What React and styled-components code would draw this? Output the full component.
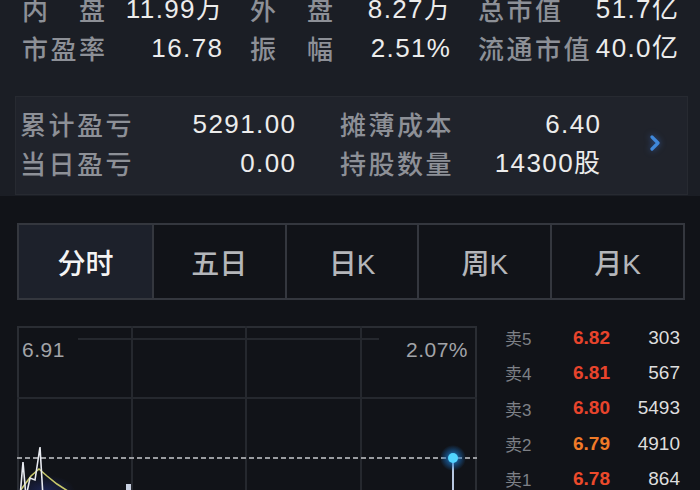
import styled, { createGlobalStyle } from "styled-components";

const GlobalStyle = createGlobalStyle`
  html, body {
    margin:0;
    padding:0;
    background:#111318;
  }
  body {
    width:700px;
    height:490px;
    overflow:hidden;
    font-family:"Liberation Sans","Noto Sans CJK SC",sans-serif;
  }
`;

const quotes = [
  ["内　盘", "11.99万"],
  ["外　盘", "8.27万"],
  ["总市值", "51.7亿"],
  ["市盈率", "16.78"],
  ["振　幅", "2.51%"],
  ["流通市值", "40.0亿"],
];

const holdings = [
  ["累计盈亏", "5291.00"],
  ["摊薄成本", "6.40"],
  ["当日盈亏", "0.00"],
  ["持股数量", "14300股"],
];

const tabs = ["分时", "五日", "日K", "周K", "月K"];

const asks = [
  ["卖5", "6.82", "303", "#e8442c"],
  ["卖4", "6.81", "567", "#e8442c"],
  ["卖3", "6.80", "5493", "#e8442c"],
  ["卖2", "6.79", "4910", "#f07a28"],
  ["卖1", "6.78", "864", "#ec4a2b"],
];

const App = () => {
  return (
    <>
      <GlobalStyle />
      <Top>
        <QuoteGrid>
          {quotes.map(([label, value]) => (
            <Stat key={label}>
              <Label>{label}</Label>
              <Value>{value}</Value>
            </Stat>
          ))}
        </QuoteGrid>
        <Panel>
          <PanelGrid>
            {holdings.map(([label, value]) => (
              <Stat key={label} $h={39.5}>
                <Label>{label}</Label>
                <Value>{value}</Value>
              </Stat>
            ))}
          </PanelGrid>
          <Chevron>
            <svg width="14" height="18" viewBox="0 0 14 18">
              <path d="M4 3 L10 9 L4 15" fill="none" stroke="#3f88da" strokeWidth="3.2" strokeLinecap="round" strokeLinejoin="round" />
            </svg>
          </Chevron>
        </Panel>
      </Top>

      <Tabs>
        {tabs.map((t, i) => (
          <Tab key={t} $active={i === 0}>{t}</Tab>
        ))}
      </Tabs>

      <Market>
        <Chart>
          <svg width="460" height="171" viewBox="0 0 460 171">
            <defs>
              <radialGradient id="glow">
                <stop offset="0%" stopColor="#2aa8ff" stopOpacity="0.9" />
                <stop offset="60%" stopColor="#1a6fc0" stopOpacity="0.45" />
                <stop offset="100%" stopColor="#1a6fc0" stopOpacity="0" />
              </radialGradient>
              <radialGradient id="haze">
                <stop offset="0%" stopColor="#23307a" stopOpacity="0.6" />
                <stop offset="100%" stopColor="#23307a" stopOpacity="0" />
              </radialGradient>
            </defs>
            <rect x="1" y="1" width="458" height="175" fill="none" stroke="#2a2d33" strokeWidth="2" />
            {[115, 229, 344].map((x) => (
              <line key={x} x1={x} y1="0" x2={x} y2="171" stroke="#25282e" strokeWidth="2" />
            ))}
            <line x1="61" y1="13" x2="362" y2="13" stroke="#25282e" strokeWidth="2" />
            <line x1="0" y1="72" x2="460" y2="72" stroke="#25282e" strokeWidth="2" />
            <line x1="0" y1="132" x2="460" y2="132" stroke="#9a9ca0" strokeWidth="2.2" strokeDasharray="5 3" />
            <ellipse cx="28" cy="165" rx="30" ry="16" fill="url(#haze)" />
            <polyline points="3,165 14,150 22,143 30,150 40,158 60,171" fill="none" stroke="#c8c86a" strokeWidth="1.6" />
            <polyline points="3,171 6,136 9,171 13,152 18,154 23,121 26,171" fill="none" stroke="#e8eaf0" strokeWidth="1.6" />
            <rect x="109" y="158" width="5" height="13" fill="#c8d0e0" />
            <line x1="436" y1="132" x2="436" y2="171" stroke="#b8c8e0" strokeWidth="2" />
            <circle cx="436" cy="132" r="13" fill="url(#glow)" />
            <circle cx="436" cy="132" r="5" fill="#52d4ff" />
          </svg>
          <ChartTag>6.91</ChartTag>
          <ChartTag $right>2.07%</ChartTag>
        </Chart>
        <OrderBook>
          {asks.map(([label, price, vol, color]) => (
            <BookRow key={label}>
              <BookLabel>{label}</BookLabel>
              <BookPrice $color={color}>{price}</BookPrice>
              <BookVolume>{vol}</BookVolume>
            </BookRow>
          ))}
        </OrderBook>
      </Market>
    </>
  );
};

const Top = styled.section`
  background:#1b1e25;
  padding:0 12px 1px 15px;
`;

const QuoteGrid = styled.div`
  display:grid;
  grid-template-columns:repeat(3,200px);
  column-gap:28px;
  margin:-11px 0 0 7px;
`;

const Stat = styled.div`
  display:flex;
  justify-content:space-between;
  align-items:center;
  height:${(props) => props.$h || 39}px;
  white-space:nowrap;
`;

const Label = styled.span`
  font-family:"Noto Sans CJK SC",sans-serif;
  font-size:26px;
  font-weight:500;
  letter-spacing:2.5px;
  color:#8d9097;
  line-height:1;
`;

const Value = styled.span`
  font-family:"Liberation Sans","Noto Sans CJK SC",sans-serif;
  font-size:26px;
  letter-spacing:1.4px;
  margin-right:-1.4px;
  color:#ececec;
  line-height:1;
`;

const Panel = styled.div`
  margin-top:29px;
  display:flex;
  align-items:center;
  background:#20232b;
  border:1px solid #272a31;
  padding:7px 0 11px 4px;
`;

const PanelGrid = styled.div`
  display:grid;
  grid-template-columns:275px 260px;
  column-gap:45px;
`;

const Chevron = styled.div`
  display:flex;
  margin-left:48px;
  margin-top:-2px;
  filter:drop-shadow(0 0 3px rgba(60,120,220,0.6));
`;

const Tabs = styled.div`
  display:grid;
  grid-template-columns:repeat(5,1fr);
  width:668px;
  height:77px;
  margin:27px 0 0 17px;
  border:2px solid #34373e;
  box-sizing:border-box;
`;

const Tab = styled.div`
  display:flex;
  align-items:center;
  justify-content:center;
  font-family:"Liberation Sans","Noto Sans CJK SC",sans-serif;
  font-size:28px;
  font-weight:500;
  color:${(props) => (props.$active ? "#f4f4f4" : "#b4b6ba")};
  background:${(props) => (props.$active ? "#1d212b" : "#111318")};
  & + & {
    border-left:2px solid #34373e;
  }
`;

const Market = styled.div`
  display:flex;
  margin-top:20px;
`;

const Chart = styled.div`
  position:relative;
  width:460px;
  height:171px;
  margin:6px 0 0 17px;
  & > svg {
    display:block;
  }
`;

const ChartTag = styled.span`
  position:absolute;
  top:13px;
  ${(props) => (props.$right ? "right:9px;" : "left:5px;")}
  font-size:21px;
  letter-spacing:0.5px;
  color:#a2a4a8;
  line-height:1;
`;

const OrderBook = styled.div`
  flex:1;
  padding:0 20px 0 28px;
`;

const BookRow = styled.div`
  display:grid;
  grid-template-columns:68px 1fr auto;
  align-items:center;
  height:35.3px;
`;

const BookLabel = styled.span`
  font-size:17px;
  color:#7d8086;
`;

const BookPrice = styled.span`
  font-size:19px;
  font-weight:bold;
  color:${(props) => props.$color};
`;

const BookVolume = styled.span`
  font-size:19px;
  color:#dedede;
  text-align:right;
`;

export default App;
